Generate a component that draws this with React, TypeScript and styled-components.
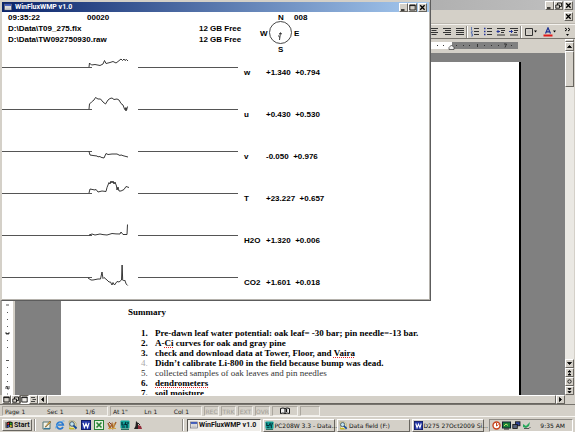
import React from "react";
import styled, { createGlobalStyle, css } from "styled-components";

const face = "#d4d0c8";
const uiFont = '"DejaVu Sans", Verdana, sans-serif';
const boldFont = '"Roboto", "Liberation Sans", sans-serif';

const GlobalStyle = createGlobalStyle`
  * { box-sizing: border-box; }
  html, body { margin: 0; padding: 0; }
  body { background: ${face}; overflow: hidden; }
  button { font: inherit; color: inherit; margin: 0; padding: 0; }
  svg { display: block; flex: none; }
`;

const raised = css`
  border: 1px solid;
  border-color: #ffffff #68655f #68655f #ffffff;
  background: ${face};
`;

const Desktop = styled.div`
  position: relative;
  display: flex;
  flex-direction: column;
  height: 100vh;
  overflow: hidden;
  font: 6px/9px ${uiFont};
  color: #111;
  background: ${face};
`;

const SmallButton = styled.button<{ $pressed?: boolean }>`
  ${raised}
  display: flex;
  align-items: center;
  justify-content: center;
  flex: none;
  width: 9px;
  height: 9px;
  ${(p) => p.$pressed && css`
    border-color: #68655f #fff #fff #68655f;
    background: #ebe9e4;
  `}
`;

const ButtonGroup = styled.div<{ $gap?: number }>`
  display: flex;
  gap: ${(p) => p.$gap ?? 0}px;
`;

/* word processor */

const WordWindow = styled.main`
  flex: 1;
  min-height: 0;
  display: flex;
  flex-direction: column;
`;

const WordTitle = styled.header`
  display: flex;
  justify-content: flex-end;
  gap: 1px;
  height: 10px;
  padding: 0 2px 0 0;
  align-items: flex-end;
  background: linear-gradient(90deg, #808080, #c0c0c0);
`;

const MenuRow = styled.div`
  display: flex;
  justify-content: flex-end;
  align-items: center;
  height: 14px;
  padding-right: 2px;
  border-bottom: 1px solid #bab6ae;
`;

const Toolbar = styled.div`
  display: flex;
  justify-content: flex-end;
  align-items: center;
  height: 15px;
  padding-right: 2px;
  border-top: 1px solid #f4f2ee;
  border-bottom: 1px solid #77746e;
`;

const ToolButton = styled.button<{ $w?: number }>`
  display: flex;
  justify-content: center;
  align-items: center;
  width: ${(p) => p.$w ?? 13}px;
  height: 12px;
  border: 0;
  background: none;
`;

const Divider = styled.span`
  flex: none;
  width: 2px;
  height: 12px;
  border-left: 1px solid #8d8a84;
  border-right: 1px solid #fff;
`;

const Workspace = styled.div`
  flex: 1;
  min-height: 0;
  display: flex;
  padding-right: 1px;
`;

const Editor = styled.div`
  flex: 1;
  min-width: 0;
  display: flex;
  flex-direction: column;
`;

const Ruler = styled.div`
  display: flex;
  justify-content: flex-end;
  height: 14px;
  padding: 3px 47px 3px 0;
`;

const Canvas = styled.div`
  flex: 1;
  min-height: 0;
  display: flex;
  background: #808080;
`;

const SideRuler = styled.div`
  display: flex;
  flex: none;
  align-items: flex-end;
  width: 15px;
  background: #fff;
  border-left: 2px solid #a5a29c;
  border-right: 2px solid ${face};
`;

const Sheet = styled.article`
  flex: 1;
  min-width: 0;
  margin: 9px 44px 0 46px;
  padding: 245px 20px 0 67px;
  overflow: hidden;
  background: #fff;
  border-right: 2px solid #000;
  font: bold 9px/10px "Liberation Serif", "Times New Roman", serif;
  color: #000;
  white-space: nowrap;
`;

const Heading = styled.h1`
  margin: 0 0 11px;
  font: inherit;
`;

const List = styled.ol`
  list-style: none;
  margin: 0;
  padding: 0 0 0 13px;
`;

const Item = styled.li<{ $plain?: boolean }>`
  display: flex;
  font-weight: ${(p) => (p.$plain ? "normal" : "bold")};
  color: ${(p) => (p.$plain ? "#333" : "#000")};
`;

const Marker = styled.span<{ $faint?: boolean }>`
  flex: none;
  width: 14px;
  ${(p) => p.$faint && css`
    color: #aaa;
    font-weight: normal;
  `}
`;

const Misspelt = styled.span`
  text-decoration: underline dotted #e02828 1px;
  text-underline-offset: 1px;
  text-decoration-skip-ink: none;
`;

const VScroll = styled.div`
  display: flex;
  flex-direction: column;
  flex: none;
  width: 9px;
  background: #eae8e3;
`;

const SplitBox = styled.div`
  ${raised}
  height: 3px;
`;

const VThumb = styled.div`
  ${raised}
  height: 36px;
  margin-bottom: auto;
`;

const HScroll = styled.div`
  display: flex;
  height: 9px;
  padding: 0 10px 0 2px;
`;

const HThumb = styled.div`
  ${raised}
  flex: 1;
`;

const StatusBar = styled.footer`
  display: flex;
  align-items: center;
  height: 12px;
  padding: 1px 2px 0;
  gap: 2px;
  border-top: 1px solid #77746e;
`;

const StatusPane = styled.div<{ $w: number; $faint?: boolean }>`
  display: flex;
  justify-content: ${(p) => (p.$faint ? "center" : "space-between")};
  align-items: center;
  width: ${(p) => p.$w}px;
  height: 10px;
  padding: ${(p) => (p.$faint ? "0" : "0 12px 0 2px")};
  border: 1px solid;
  border-color: #aaa69e #f2f0ec #f2f0ec #aaa69e;
  color: ${(p) => (p.$faint ? "#a19e97" : "#222")};
  white-space: nowrap;
`;

/* flux monitor */

const FluxWindow = styled.section`
  position: absolute;
  top: 0;
  left: 0;
  width: 75vw;
  padding: 2px 1px 1px 0;
  background: #fff;
  border: solid;
  border-width: 0 1px 1px 2px;
  border-color: ${face} #5c5c5c #5c5c5c ${face};
  box-shadow: inset 0 2px 0 ${face}, inset -1px -1px 0 #b5b2ac;
  font: bold 8px/11px "Liberation Sans", Arial, sans-serif;
  color: #000;
  white-space: pre;
`;

const FluxTitle = styled.header`
  display: flex;
  align-items: center;
  gap: 3px;
  height: 10px;
  padding: 0 2px;
  background: linear-gradient(90deg, #0a246a, #a6caf0);
  color: #fff;
  font: bold 7px/10px ${boldFont};
`;

const FluxName = styled.h2`
  flex: 1;
  margin: 0;
  font: inherit;
`;

const FluxHead = styled.div`
  display: flex;
  height: 35px;
  padding-left: 6px;
`;

const Files = styled.dl`
  display: grid;
  grid-template-columns: 79px 112px 60px;
  grid-auto-rows: 11px;
  margin: 0;
`;

const Cell = styled.dd<{ $span?: number }>`
  margin: 0;
  grid-column: span ${(p) => p.$span ?? 1};
`;

const Bearing = styled.div`
  margin-left: -15px;
`;

const Channel = styled.div`
  display: grid;
  grid-template-columns: 236px 22px 1fr;
  height: 42px;
`;

const Reading = styled.span`
  padding: 20px 0 0 6px;
`;

/* taskbar */

const Taskbar = styled.nav`
  display: flex;
  align-items: center;
  height: 16px;
  padding: 1px 2px 0;
  border-top: 1px solid #f7f5f1;
`;

const Start = styled.button`
  ${raised}
  display: flex;
  align-items: center;
  width: 30px;
  height: 12px;
  padding-left: 2px;
  gap: 1px;
  font: bold 7px/9px ${boldFont};
`;

const QuickLaunch = styled.div`
  display: flex;
  gap: 3px;
  width: 146px;
  padding-left: 6px;
`;

const Launch = styled.button`
  width: 10px;
  height: 10px;
  border: 0;
  background: none;
`;

const Tasks = styled.div`
  display: flex;
  flex: 1;
  min-width: 0;
  gap: 2px;
  padding: 0 5px 0 3px;
`;

const Task = styled.button<{ $active?: boolean }>`
  ${raised}
  display: flex;
  align-items: center;
  flex: 1;
  min-width: 0;
  height: 13px;
  padding-left: 1px;
  gap: 1px;
  white-space: nowrap;
  ${(p) => p.$active && css`
    border-color: #55534f #fff #fff #55534f;
    background: #efede9;
    font: bold 7px/9px ${boldFont};
    padding-left: 2px;
  `}
`;

const Tray = styled.div`
  display: flex;
  align-items: center;
  gap: 1px;
  width: 84px;
  height: 13px;
  padding: 0 7px 0 2px;
  border: 1px solid;
  border-color: #8d8a84 #fff #fff #8d8a84;
`;

const Clock = styled.time`
  margin-left: auto;
`;

type GlyphKind = "min" | "max" | "restore" | "close" | "up" | "down" | "left" | "right" | "dup" | "ddown" | "ball";

const glyphs: Record<GlyphKind, React.ReactNode> = {
  min: <path d="M1 6h3.5" strokeWidth="1.4" />,
  max: <path d="M.8 1h5.4v5H.8zM.8 1.6h5.4" />,
  restore: <path d="M2.5 3V1h4v3.5h-2M.8 3h3.7v3.2H.8z" />,
  close: <path d="M1.2 1.2l4.4 4.6M5.6 1.2L1.2 5.8" strokeWidth="1.3" />,
  up: <path d="M1.5 4.5l2-2 2 2z" fill="#000" />,
  down: <path d="M1.5 2.5l2 2 2-2z" fill="#000" />,
  left: <path d="M4.5 1.5l-2 2 2 2z" fill="#000" />,
  right: <path d="M2.5 1.5l2 2-2 2z" fill="#000" />,
  dup: <path d="M2 3l1.5-1.5L5 3zM2 6l1.5-1.5L5 6z" fill="#000" />,
  ddown: <path d="M2 1.5L3.5 3 5 1.5zM2 4.5L3.5 6 5 4.5z" fill="#000" />,
  ball: <circle cx="3.5" cy="3.5" r="1.7" />,
};

const Glyph = ({ kind }: { kind: GlyphKind }) => (
  <svg width="7" height="7" viewBox="0 0 7 7" fill="none" stroke="#000" strokeWidth=".8">{glyphs[kind]}</svg>
);

const TbIcon = ({ children }: { children: React.ReactNode }) => (
  <svg width="10" height="10" viewBox="0 0 10 10" fill="none" stroke="#333" strokeWidth="1">{children}</svg>
);

const DropArrow = () => (
  <svg width="3" height="3" viewBox="0 0 3 3"><path d="M0 .5h3L1.5 2.5z" fill="#000" /></svg>
);

const AppIcon = () => (
  <svg width="8" height="8" viewBox="0 0 8 8">
    <rect x=".5" y="1" width="7" height="6" fill="#e8e8e8" stroke="#556" strokeWidth=".6" />
    <path d="M1 2h6" stroke="#2443b5" strokeWidth="1.6" />
    <path d="M1.5 4h5M1.5 5.5h5" stroke="#aaa" strokeWidth=".5" />
  </svg>
);

const Flag = () => (
  <svg width="8" height="8" viewBox="0 0 8 8">
    <path d="M.3 2h1M.3 4h1M.3 6h1" stroke="#000" />
    <path d="M1.500 1.500Q4.500-.3 7.600 1.200V7Q4.500 5.500 1.500 7.200z" fill="#000" />
    <path d="M2.400 2l1.700-.6v2l-1.700.4z" fill="#e33" />
    <path d="M4.800 1.400l2 .3v2l-2-.3z" fill="#3a3" />
    <path d="M2.400 4.400l1.700-.5v1.800l-1.700.5z" fill="#35d" />
    <path d="M4.800 4l2 .2V6l-2-.3z" fill="#dc3" />
  </svg>
);

const WordIcon = ({ size = 10 }: { size?: number }) => (
  <svg width={size} height={size} viewBox="0 0 10 10">
    <rect x=".5" y=".5" width="9" height="9" fill="#2638a8" stroke="#111c66" />
    <path d="M2 2.800l1.400 4.600L5 3.600l1.600 3.800L8 2.800" fill="none" stroke="#fff" strokeWidth="1.200" />
  </svg>
);

const PcIcon = ({ size = 10 }: { size?: number }) => (
  <svg width={size} height={size} viewBox="0 0 10 10">
    <rect x=".5" y=".5" width="9" height="8" rx="1" fill="#12a59a" />
    <path d="M2 2v3h2.500M6 2L5 4.500h2V8M2 7h3M8 2v2" stroke="#032c38" strokeWidth="1.200" fill="none" />
    <path d="M1 9.300h8" stroke="#054" />
  </svg>
);

const FolderSearch = ({ size = 10 }: { size?: number }) => (
  <svg width={size} height={size} viewBox="0 0 10 10">
    <path d="M1 1h5l2 2v6H2z" fill="#f3ecc0" stroke="#9c9450" strokeWidth=".6" />
    <circle cx="4" cy="4" r="2.300" fill="#bfe3ef" stroke="#456" />
    <path d="M5.500 5.500l3 3" stroke="#114a9c" strokeWidth="1.800" />
    <path d="M1 8.500h5" stroke="#c5ba22" strokeWidth="1.400" />
  </svg>
);

const quick: { name: string; icon: React.ReactNode }[] = [
  { name: "Show Desktop", icon: <svg width="10" height="10" viewBox="0 0 10 10"><path d="M1 2h7v7H1z" fill="#f4f3e6" stroke="#577" /><path d="M3 7l5-6 1 1-5 5z" fill="#e8b43c" stroke="#543" strokeWidth=".5" /><path d="M2 8.500h6" stroke="#379" strokeWidth="1.200" /></svg> },
  { name: "Internet Explorer", icon: <svg width="10" height="10" viewBox="0 0 10 10"><path d="M8 7A3.300 3.300 0 1 1 8.300 5H3" fill="none" stroke="#2878d0" strokeWidth="1.700" /><path d="M.8 8.500C-.5 6 7.500-.5 9.500 1.200" fill="none" stroke="#58a8ec" strokeWidth=".9" /></svg> },
  { name: "Search", icon: <FolderSearch /> },
  { name: "Word", icon: <WordIcon /> },
  { name: "Excel", icon: <svg width="10" height="10" viewBox="0 0 10 10"><rect x=".5" y=".5" width="9" height="9" fill="#e5f0df" stroke="#268034" /><path d="M2.500 2.500l5 5M7.500 2.500l-5 5" stroke="#268034" strokeWidth="1.600" /></svg> },
  { name: "Mail", icon: <svg width="10" height="10" viewBox="0 0 10 10"><path d="M1 3l2 5 2-4 1 4 3-6" fill="none" stroke="#a6622c" strokeWidth="1.500" /><path d="M1 8.500h8M7 3v5" stroke="#d0a34a" /><path d="M2 2l2 2" stroke="#733" /></svg> },
  { name: "PC208W", icon: <PcIcon /> },
  { name: "Logger", icon: <svg width="10" height="10" viewBox="0 0 10 10"><path d="M3 1l2 2v6H1l1.500-3z" fill="#222" /><path d="M5 5l3 1 1 3H5z" fill="#922e3c" /><path d="M5 3l2 2" stroke="#222" /></svg> },
];

const channels = [
  { name: "w", values: "+1.340  +0.794", d: "M87 20l.5-4 2 2 3.500-.5 5 1 3-1.500 1.500-3.500 1.500 3 4-1 3-1 3 1.500 2-1.500 3-2.500 1.500 1.500 1.500-1.500 1 1.500 1.500-1 1.500 1.500" },
  { name: "u", values: "+0.430  +0.530", d: "M87 20l.5-5 2-2 2.500-2 1.500-2.500 2.500 1.500h2.500l2.500 3 2.500 2 2.500-4 2-1.500 2-.5 2 1.500 3-.5 2 1 2 3.500 2 1.500 1.500 4 1 1.500 1-2.500-1.500 0 1.500 2.500 1-4" },
  { name: "v", values: "-0.050  +0.976", d: "M87 20.500l1 3.500 3 .5 4 .5 1 .8 2-.3 1 .8 3 .7 2-4.500 2 1 4-.5h5l3 1.500 1-.6 2 .8 5 1.300" },
  { name: "T", values: "+23.227  +0.657", d: "M87 20l1-4 5 1 1-.6 2 2.600 4-1 4 .5 1-4 2-5 1 1.500 1-3 1 2 1-2 1 3 1-2 1.500 4 .5 4 1-3 1 4 2 0 3-1.500 2-3 3 1" },
  { name: "H2O", values: "+1.320  +0.006", d: "M87 20l3-1 3 1 5-1 3 .6 4 .4 5-1.500 4 .4 4 .1 1-2 2 2.500 4 0 .5-10" },
  { name: "CO2", values: "+1.601  +0.018", d: "M86 21l3 2h2l5-1h2.500l1.500-7 1 6.500 1-1 3 2.500 2 2 1.500 0 1.500 3 1-2.500 1.500 2.500 2.500-3.500 2 .5 2.500-2 .6-15 .6 15 1 1 1-1 1.500 4 1.500 1.500" },
];

const ListText = ({ n, children, plain, faint }: { n: number; children: React.ReactNode; plain?: boolean; faint?: boolean }) => (
  <Item $plain={plain}><Marker $faint={faint}>{n}.</Marker><span>{children}</span></Item>
);

const WindowButtons = ({ restore }: { restore?: boolean }) => (
  <>
    <ButtonGroup>
      <SmallButton aria-label="Minimize"><Glyph kind="min" /></SmallButton>
      <SmallButton aria-label={restore ? "Restore" : "Maximize"}><Glyph kind={restore ? "restore" : "max"} /></SmallButton>
    </ButtonGroup>
    <SmallButton aria-label="Close"><Glyph kind="close" /></SmallButton>
  </>
);

const FluxMonitor = () => (
  <FluxWindow>
    <FluxTitle>
      <AppIcon />
      <FluxName>WinFluxWMP v1.0</FluxName>
      <ButtonGroup $gap={1}><WindowButtons /></ButtonGroup>
    </FluxTitle>
    <FluxHead>
      <Files>
        <Cell>09:35:22</Cell><Cell $span={2}>00020</Cell>
        <Cell $span={2}>D:\Data\T09_275.flx</Cell><Cell>12 GB Free</Cell>
        <Cell $span={2}>D:\Data\TW092750930.raw</Cell><Cell>12 GB Free</Cell>
      </Files>
      <Bearing>
        <svg width="64" height="44" viewBox="0 0 64 44" fontFamily="Liberation Sans" fontSize="8" fontWeight="bold">
          <circle cx="36.500" cy="20.500" r="11" fill="none" stroke="#333" strokeWidth=".9" />
          <path d="M36.500 20.500l-1 7.500M35 22l1.500-.7 1.500.7M34.500 23.500l1 2" fill="none" stroke="#222" strokeWidth=".9" />
          <text x="34" y="8">N</text>
          <text x="50" y="8">008</text>
          <text x="16" y="24">W</text>
          <text x="50" y="24">E</text>
          <text x="34" y="40">S</text>
        </svg>
      </Bearing>
    </FluxHead>
    {channels.map((c) => (
      <Channel key={c.name}>
        <svg width="236" height="42" viewBox="0 0 236 42" fill="none">
          <path d="M0 20.500h90M136 20.500h100" stroke="#555" />
          <path d={c.d} stroke="#222" strokeWidth=".9" />
        </svg>
        <Reading>{c.name}</Reading>
        <Reading>{c.values}</Reading>
      </Channel>
    ))}
  </FluxWindow>
);

const App = () => (
  <>
    <GlobalStyle />
    <Desktop>
      <WordWindow>
        <WordTitle><WindowButtons restore /></WordTitle>
        <MenuRow><SmallButton aria-label="Close document"><Glyph kind="close" /></SmallButton></MenuRow>
        <Toolbar>
          <ToolButton aria-label="Center"><TbIcon><path d="M1 1.500h8M2.500 3.500h5M1 5.500h8M2.500 7.500h5" /></TbIcon></ToolButton>
          <ToolButton aria-label="Align right"><TbIcon><path d="M1 1.500h8M3 3.500h6M1 5.500h8M3 7.500h6" /></TbIcon></ToolButton>
          <ToolButton aria-label="Justify"><TbIcon><path d="M1 1.500h8M1 3.500h8M1 5.500h8M1 7.500h8" /></TbIcon></ToolButton>
          <Divider />
          <ToolButton aria-label="Numbering"><TbIcon><path d="M4 1.500h5M4 4.500h5M4 7.500h5" /><path d="M1.500 0v3M1 4h1.500L1 6h1.500M1 7h1.500v2H1" stroke="#35a" strokeWidth=".7" /></TbIcon></ToolButton>
          <ToolButton aria-label="Bullets"><TbIcon><path d="M4 1.500h5M4 4.500h5M4 7.500h5" /><path d="M1 1.500h1.500M1 4.500h1.500M1 7.500h1.500" stroke="#239" strokeWidth="1.500" /></TbIcon></ToolButton>
          <ToolButton aria-label="Decrease indent"><TbIcon><path d="M1 1.500h8M5 3.500h4M5 5.500h3M1 8h8" /><path d="M4 4.500H1M2.500 3L1 4.500 2.500 6" stroke="#239" /></TbIcon></ToolButton>
          <ToolButton aria-label="Increase indent"><TbIcon><path d="M1 1.500h8M5 3.500h4M5 5.500h3M1 8h8" /><path d="M0 4.500h3.500M2 3l1.500 1.500L2 6" stroke="#239" /></TbIcon></ToolButton>
          <Divider />
          <ToolButton $w={17} aria-label="Borders"><TbIcon><path d="M1.500 1.500h7v7h-7z" /><path d="M5 3v4M3 5h4" stroke="#bbb" strokeWidth=".6" /></TbIcon><DropArrow /></ToolButton>
          <ToolButton $w={20} aria-label="Font color"><TbIcon><path d="M2.500 6.500L5 .8l2.500 5.700M3.500 4.800h3" stroke="#1c2f90" strokeWidth="1.200" /><path d="M.5 8.500h9" stroke="#e01818" strokeWidth="2" /></TbIcon><DropArrow /></ToolButton>
          <ToolButton $w={14} aria-label="More buttons"><svg width="10" height="10" viewBox="0 0 10 10"><path d="M4 1l2 1.500L4 4M7 1l2 1.500L7 4" fill="none" stroke="#000" /><path d="M5 7h3L6.500 9z" /></svg></ToolButton>
        </Toolbar>
        <Workspace>
          <Editor>
            <Ruler>
              <svg width="100" height="8" viewBox="0 0 100 8">
                <path d="M0 0h34v7H0z" fill="#fff" />
                <path d="M34 0h66v7H34z" fill="#808080" />
                <path d="M19 3.500h1M25 3.500h1M38 3.500h1M45 3.500h1M51 3.500h1M66 3.500h1M73 3.500h1M80 3.500h1M93 3.500h1" stroke="#333" />
                <path d="M59.500 2v3M86 2h2.500l-1.500 3.500" fill="none" stroke="#222" strokeWidth=".8" />
                <path d="M31 7.500V5.500l2.500-2.500L36 5.500v2z" fill="#eee" stroke="#333" strokeWidth=".7" />
              </svg>
            </Ruler>
            <Canvas>
              <SideRuler>
                <svg width="11" height="96" viewBox="0 0 11 96">
                  <path d="M4 6h3M5 13.500h1M5 20.500h1M5 27.500h1M5 41.500h1M5 48.500h1M4 61.500h3M5 68.500h1M5 75.500h1M5 82.500h1M5 95h1" stroke="#555" />
                  <path d="M4 34.500h3M4 33v2h3v-2M4 90v-2.500h1.500V90H7v-3" fill="none" stroke="#222" strokeWidth=".8" />
                </svg>
              </SideRuler>
              <Sheet>
                <Heading>Summary</Heading>
                <List>
                  <ListText n={1}>Pre-dawn leaf water potential: oak leaf= -30 bar; pin needle=-13 bar.</ListText>
                  <ListText n={2}>A-<Misspelt>Ci</Misspelt> curves for oak and gray pine</ListText>
                  <ListText n={3}>check and download data at Tower, Floor, and <Misspelt>Vaira</Misspelt></ListText>
                  <ListText n={4} faint>Didn’t calibrate Li-800 in the field because bump was dead.</ListText>
                  <ListText n={5} plain>collected samples of oak leaves and pin needles</ListText>
                  <ListText n={6}><Misspelt>dendrometers</Misspelt></ListText>
                  <ListText n={7}>soil moisture</ListText>
                </List>
              </Sheet>
            </Canvas>
          </Editor>
          <VScroll>
            <SplitBox />
            <SmallButton aria-label="Scroll up"><Glyph kind="up" /></SmallButton>
            <VThumb />
            <SmallButton aria-label="Scroll down"><Glyph kind="down" /></SmallButton>
            <SmallButton aria-label="Previous page"><Glyph kind="dup" /></SmallButton>
            <SmallButton aria-label="Select browse object"><Glyph kind="ball" /></SmallButton>
            <SmallButton aria-label="Next page"><Glyph kind="ddown" /></SmallButton>
          </VScroll>
        </Workspace>
        <HScroll>
          <SmallButton aria-label="Normal view"><Glyph kind="max" /></SmallButton>
          <SmallButton aria-label="Web layout"><Glyph kind="restore" /></SmallButton>
          <SmallButton $pressed aria-label="Print layout"><Glyph kind="max" /></SmallButton>
          <SmallButton aria-label="Outline view"><svg width="7" height="7" viewBox="0 0 7 7"><path d="M1 1.500h4M2.500 3.500H6M1 5.500h4" stroke="#222" strokeWidth=".8" /></svg></SmallButton>
          <SmallButton aria-label="Scroll left"><Glyph kind="left" /></SmallButton>
          <HThumb />
          <SmallButton aria-label="Scroll right"><Glyph kind="right" /></SmallButton>
        </HScroll>
        <StatusBar>
          <StatusPane $w={106}><span>Page 1</span><span>Sec 1</span><span>1/6</span></StatusPane>
          <StatusPane $w={92}><span>At 1"</span><span>Ln 1</span><span>Col 1</span></StatusPane>
          {["REC", "TRK", "EXT", "OVR"].map((m) => <StatusPane key={m} $w={15} $faint>{m}</StatusPane>)}
          <StatusPane $w={26} $faint>
            <svg width="10" height="8" viewBox="0 0 10 8"><path d="M.5 1.500q2.500-1 4.500 0 2-1 4.500 0v5q-2.500-1-4.500 0-2-1-4.500 0zM5 1.500v5" fill="#eee" stroke="#111" /><path d="M6.500 2v3" stroke="#111" strokeWidth="1.300" /></svg>
          </StatusPane>
          <StatusPane $w={20} $faint />
        </StatusBar>
      </WordWindow>
      <Taskbar>
        <Start><Flag />Start</Start>
        <ButtonGroup $gap={2}><span /><Divider /></ButtonGroup>
        <QuickLaunch>
          {quick.map((q) => <Launch key={q.name} aria-label={q.name}>{q.icon}</Launch>)}
        </QuickLaunch>
        <Divider />
        <Tasks>
          <Task $active><AppIcon /><span>WinFluxWMP v1.0</span></Task>
          <Task><PcIcon size={9} /><span>PC208W 3.3 - Data...</span></Task>
          <Task><FolderSearch size={9} /><span>Data field (F:)</span></Task>
          <Task><WordIcon size={9} /><span>D275 27Oct2009 Si...</span></Task>
        </Tasks>
        <Tray>
          <svg width="9" height="9" viewBox="0 0 9 9"><circle cx="4.500" cy="4.500" r="3.500" fill="#fff" stroke="#c8431c" strokeWidth="1.400" /><path d="M4.500 2v3l2-1.500" fill="none" stroke="#c8431c" /></svg>
          <svg width="9" height="9" viewBox="0 0 9 9"><rect x=".5" y="1" width="8" height="6" fill="#17803a" stroke="#123" /><path d="M2 5l2-2 2 1.500" fill="none" stroke="#bfe66c" /><path d="M2 8h5" stroke="#222" /></svg>
          <svg width="9" height="9" viewBox="0 0 9 9"><rect x="3.500" y=".8" width="4.500" height="4" fill="#33469b" stroke="#111" strokeWidth=".8" /><rect x=".8" y="3.500" width="4.500" height="4" fill="#55607c" stroke="#111" strokeWidth=".8" /></svg>
          <svg width="9" height="9" viewBox="0 0 9 9"><path d="M1 3l3 2 4-4-1 4-3 2-3-1z" fill="#27a85b" /><path d="M2 7.500h5l1.500-1.500" fill="none" stroke="#555" /></svg>
          <Clock>9:35 AM</Clock>
        </Tray>
      </Taskbar>
    </Desktop>
    <FluxMonitor />
  </>
);

export default App;
